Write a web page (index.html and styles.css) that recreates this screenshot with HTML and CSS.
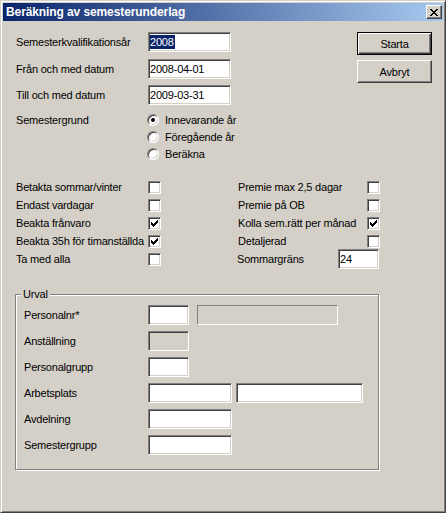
FILE: index.html
```html
<!DOCTYPE html>
<html lang="sv">

<head>
    <meta charset="UTF-8">
    <meta name="viewport" content="width=device-width, initial-scale=1.0">
    <title>Beräkning av semesterunderlag</title>
    <link rel="stylesheet" href="styles.css">
</head>

<body>
    <div class="window">
        <div class="titlebar">
            <span class="title">Beräkning av semesterunderlag</span>
            <div class="close">
                <svg width="8" height="7" viewBox="0 0 8 7" shape-rendering="crispEdges">
                    <rect x="0" y="0" width="2" height="1" />
                    <rect x="6" y="0" width="2" height="1" />
                    <rect x="1" y="1" width="2" height="1" />
                    <rect x="5" y="1" width="2" height="1" />
                    <rect x="2" y="2" width="4" height="1" />
                    <rect x="3" y="3" width="2" height="1" />
                    <rect x="2" y="4" width="4" height="1" />
                    <rect x="1" y="5" width="2" height="1" />
                    <rect x="5" y="5" width="2" height="1" />
                    <rect x="0" y="6" width="2" height="1" />
                    <rect x="6" y="6" width="2" height="1" />
                </svg>
            </div>
        </div>

        <div class="client">
            <!-- övre delen: datum och knappar -->
            <div class="top">
                <div class="fields">
                    <div class="row r1">
                        <span class="lbl">Semesterkvalifikationsår</span>
                        <div class="edit w83"><span class="sel">2008</span></div>
                    </div>
                    <div class="row r2">
                        <span class="lbl">Från och med datum</span>
                        <div class="edit w83">2008-04-01</div>
                    </div>
                    <div class="row r3">
                        <span class="lbl">Till och med datum</span>
                        <div class="edit w83">2009-03-31</div>
                    </div>
                    <div class="grund">
                        <span class="lbl">Semestergrund</span>
                        <div class="radios">
                            <div class="ropt"><span class="radio on"></span>Innevarande år</div>
                            <div class="ropt"><span class="radio"></span>Föregående år</div>
                            <div class="ropt"><span class="radio"></span>Beräkna</div>
                        </div>
                    </div>
                </div>
                <div class="actions">
                    <div class="btn default">Starta</div>
                    <div class="btn">Avbryt</div>
                </div>
            </div>

            <!-- kryssrutor -->
            <div class="checks">
                <div class="col left">
                    <div class="crow"><span class="clbl">Betakta sommar/vinter</span><span class="cb"></span></div>
                    <div class="crow"><span class="clbl">Endast vardagar</span><span class="cb"></span></div>
                    <div class="crow"><span class="clbl">Beakta frånvaro</span><span class="cb on"></span></div>
                    <div class="crow"><span class="clbl">Beakta 35h för timanställda</span><span class="cb on"></span></div>
                    <div class="crow"><span class="clbl">Ta med alla</span><span class="cb"></span></div>
                </div>
                <div class="col right">
                    <div class="crow"><span class="clbl">Premie max 2,5 dagar</span><span class="cb"></span></div>
                    <div class="crow"><span class="clbl">Premie på OB</span><span class="cb"></span></div>
                    <div class="crow"><span class="clbl">Kolla sem.rätt per månad</span><span class="cb on"></span></div>
                    <div class="crow"><span class="clbl">Detaljerad</span><span class="cb"></span></div>
                    <div class="srow"><span class="slbl">Sommargräns</span><div class="edit w41">24</div></div>
                </div>
            </div>

            <!-- urval -->
            <div class="group">
                <span class="legend">Urval</span>
                <div class="grows">
                    <div class="grow">
                        <span class="glbl">Personalnr*</span>
                        <div class="edit w41"></div>
                        <div class="static"></div>
                    </div>
                    <div class="grow">
                        <span class="glbl">Anställning</span>
                        <div class="edit w41 disabled"></div>
                    </div>
                    <div class="grow">
                        <span class="glbl">Personalgrupp</span>
                        <div class="edit w41"></div>
                    </div>
                    <div class="grow">
                        <span class="glbl">Arbetsplats</span>
                        <div class="edit w84"></div>
                        <div class="edit w127 second"></div>
                    </div>
                    <div class="grow">
                        <span class="glbl">Avdelning</span>
                        <div class="edit w84"></div>
                    </div>
                    <div class="grow">
                        <span class="glbl">Semestergrupp</span>
                        <div class="edit w84"></div>
                    </div>
                </div>
            </div>
        </div>
    </div>

    <svg width="0" height="0" style="position:absolute">
        <defs>
            <g id="tick">
                <rect x="0" y="2" width="1" height="3" />
                <rect x="1" y="3" width="1" height="3" />
                <rect x="2" y="4" width="1" height="3" />
                <rect x="3" y="3" width="1" height="3" />
                <rect x="4" y="2" width="1" height="3" />
                <rect x="5" y="1" width="1" height="3" />
                <rect x="6" y="0" width="1" height="3" />
            </g>
        </defs>
    </svg>
    <script>
        // sätt bocken i de ikryssade rutorna
        var boxes = document.querySelectorAll('.cb.on');
        for (var i = 0; i < boxes.length; i++) {
            boxes[i].innerHTML = '<svg width="7" height="7" viewBox="0 0 7 7" shape-rendering="crispEdges"><use href="#tick"/></svg>';
        }
    </script>
</body>

</html>
```

FILE: styles.css
```css
* {
    margin: 0;
    padding: 0;
}

body {
    background-color: #d4d0c8;
    font-family: "Liberation Sans", Arial, sans-serif;
    font-size: 11px;
    letter-spacing: -0.2px;
    color: #000;
}

.window {
    width: 446px;
    height: 513px;
    box-sizing: border-box;
    border: 1px solid;
    border-color: #d4d0c8 #404040 #404040 #d4d0c8;
    box-shadow: inset 1px 1px 0 #fff, inset -1px -1px 0 #808080;
    padding: 2px;
    background-color: #d4d0c8;

    display: flex;
    flex-direction: column;
}

/* titelrad */
.titlebar {
    height: 18px;
    flex-shrink: 0;
    display: flex;
    align-items: center;
    background: linear-gradient(to right, #0a246a, #a6caf0);
    color: #fff;
}

.title {
    flex: 1;
    padding-left: 3px;
    font-weight: bold;
    font-size: 12px;
    letter-spacing: -0.1px;
}

.close {
    width: 16px;
    height: 14px;
    box-sizing: border-box;
    margin-right: 1px;
    border: 1px solid;
    border-color: #fff #404040 #404040 #fff;
    box-shadow: inset -1px -1px 0 #808080;
    background-color: #d4d0c8;

    display: flex;
    align-items: center;
    justify-content: center;
}

.close svg {
    fill: #000;
    margin-left: -1px;
}

.client {
    flex: 1;
    padding: 11px 11px 0 13px;
}

/* övre del */
.top {
    display: flex;
}

.row {
    display: flex;
    align-items: center;
    height: 20px;
}

.r2 {
    margin-top: 7px;
}

.r3 {
    margin-top: 6px;
}

.lbl {
    width: 132px;
}

.edit {
    height: 20px;
    box-sizing: border-box;
    border: 1px solid;
    border-color: #808080 #fff #fff #808080;
    box-shadow: inset 1px 1px 0 #404040, inset -1px -1px 0 #d4d0c8;
    background-color: #fff;
    padding: 0 1px;

    display: flex;
    align-items: center;
}

.w41 {
    width: 41px;
}

.w83 {
    width: 83px;
}

.w84 {
    width: 84px;
}

.w127 {
    width: 127px;
}

.disabled {
    background-color: #d4d0c8;
}

.sel {
    display: inline-block;
    line-height: 14px;
    background-color: #0a246a;
    color: #fff;
    padding-right: 1px;
}

.grund {
    display: flex;
    align-items: flex-start;
    margin-top: 7px;
}

.grund .lbl {
    line-height: 16px;
}

.radios {
    display: flex;
    flex-direction: column;
    gap: 1px;
}

.ropt {
    height: 16px;
    display: flex;
    align-items: center;
}

.radio {
    width: 12px;
    height: 12px;
    box-sizing: border-box;
    border-radius: 50%;
    border: 1px solid;
    border-color: #808080 #fff #fff #808080;
    box-shadow: inset 1px 1px 0 #404040, inset -1px -1px 0 #d4d0c8;
    background-color: #fff;
    margin-left: -1px;
    margin-right: 6px;

    display: flex;
    align-items: center;
    justify-content: center;
}

.radio.on::after {
    content: "";
    width: 4px;
    height: 4px;
    border-radius: 50%;
    background-color: #000;
}

.actions {
    margin-left: auto;
    display: flex;
    flex-direction: column;
    gap: 5px;
}

.btn {
    width: 75px;
    height: 23px;
    box-sizing: border-box;
    border: 1px solid;
    border-color: #fff #404040 #404040 #fff;
    box-shadow: inset -1px -1px 0 #808080;
    background-color: #d4d0c8;

    display: flex;
    align-items: center;
    justify-content: center;
}

.btn.default {
    border-color: #000;
    box-shadow: inset 1px 1px 0 #fff, inset -1px -1px 0 #404040, inset -2px -2px 0 #808080;
}

/* kryssrutor */
.checks {
    display: flex;
    margin-top: 16px;
}

.col.left {
    width: 145px;
}

.col.right {
    margin-left: 77px;
}

.crow {
    height: 18px;
    display: flex;
    align-items: center;
}

.left .clbl {
    width: 132px;
}

.right .clbl {
    width: 129px;
}

.cb {
    width: 13px;
    height: 13px;
    box-sizing: border-box;
    border: 1px solid;
    border-color: #808080 #fff #fff #808080;
    box-shadow: inset 1px 1px 0 #404040, inset -1px -1px 0 #d4d0c8;
    background-color: #fff;

    display: flex;
    align-items: center;
    justify-content: center;
}

.cb svg {
    fill: #000;
}

.srow {
    height: 20px;
    margin-top: -1px;
    display: flex;
    align-items: center;
}

.slbl {
    width: 101px;
    margin-left: -1px;
}

/* urval */
.group {
    width: 364px;
    box-sizing: border-box;
    margin: 25px 0 0 -1px;
    border: 1px solid #808080;
    box-shadow: inset 1px 1px 0 #fff, 1px 1px 0 #fff;
    padding: 0 0 14px 0;
}

.legend {
    display: block;
    width: fit-content;
    margin: -7px 0 0 5px;
    padding: 0 2px;
    line-height: 13px;
    background-color: #d4d0c8;
}

.grows {
    margin-top: 4px;
    padding-left: 8px;
    display: flex;
    flex-direction: column;
    gap: 6px;
}

.grow {
    height: 20px;
    display: flex;
    align-items: center;
}

.glbl {
    width: 124px;
}

.static {
    width: 141px;
    height: 20px;
    box-sizing: border-box;
    margin-left: 8px;
    border: 1px solid;
    border-color: #808080 #fff #fff #808080;
}

.second {
    margin-left: 4px;
}
```
